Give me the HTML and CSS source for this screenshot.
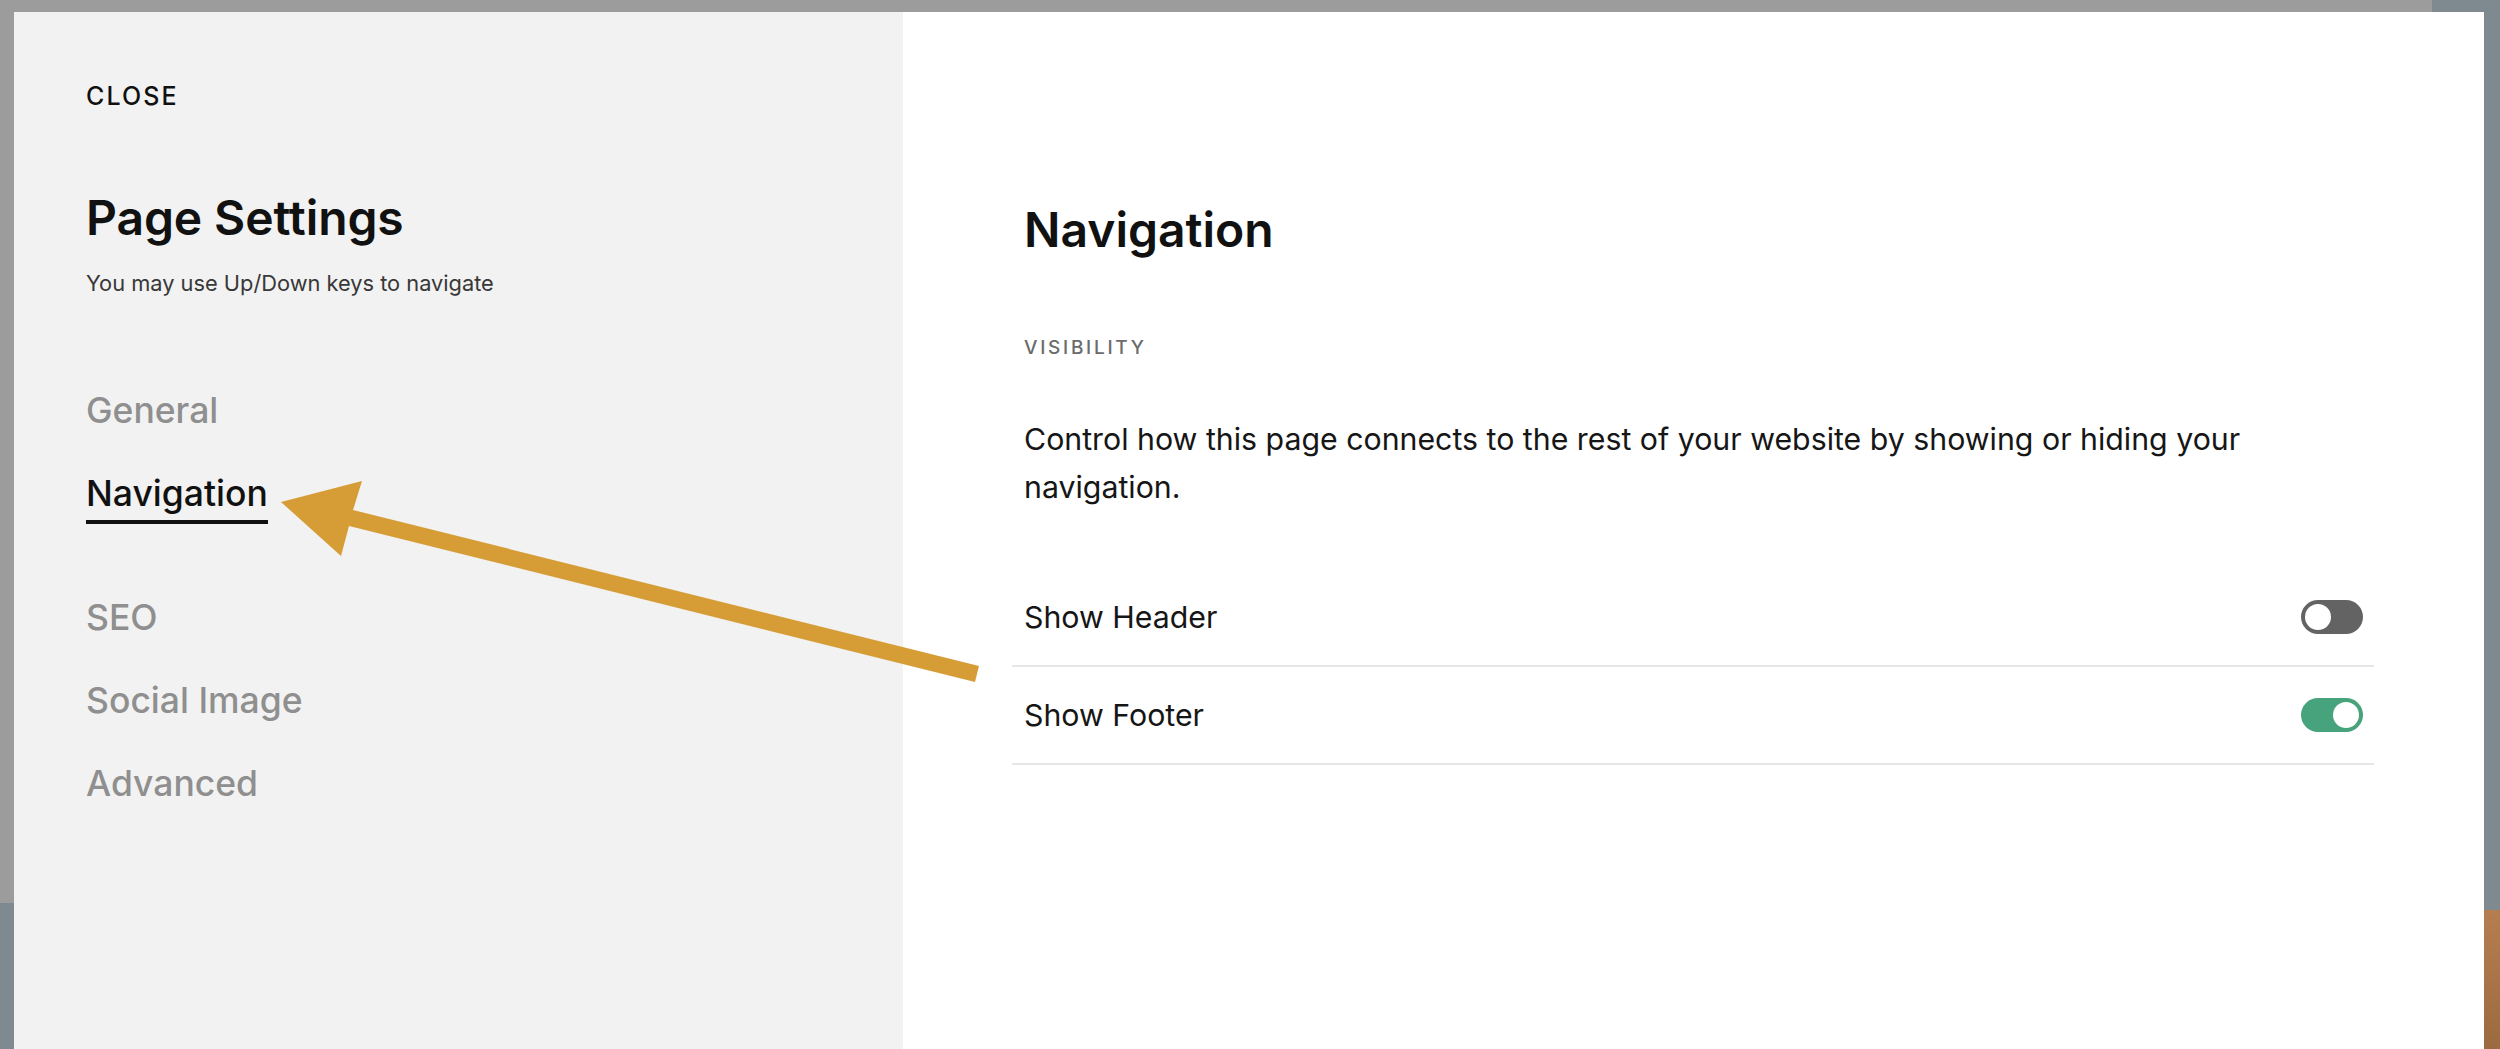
FILE: index.html
```html
<!DOCTYPE html>
<html lang="en">
<head>
<meta charset="utf-8">
<title>Page Settings</title>
<link rel="stylesheet" href="styles.css">
</head>
<body>
<div class="backdrop">
  <div class="modal">
    <aside class="sidebar">
      <div class="close">CLOSE</div>
      <h1 class="title">Page Settings</h1>
      <p class="subtitle">You may use Up/Down keys to navigate</p>
      <nav class="nav">
        <span class="nav-item">General</span>
        <span class="nav-item active">Navigation</span>
        <span class="nav-item">SEO</span>
        <span class="nav-item">Social Image</span>
        <span class="nav-item">Advanced</span>
      </nav>
    </aside>
    <main class="main">
      <h2 class="heading">Navigation</h2>
      <div class="section-label">VISIBILITY</div>
      <p class="desc">Control how this page connects to the rest of your website by showing or hiding your navigation.</p>
      <div class="rows">
        <div class="row">
          <span class="row-label">Show Header</span>
          <span class="toggle off"><span class="knob"></span></span>
        </div>
        <div class="row">
          <span class="row-label">Show Footer</span>
          <span class="toggle on"><span class="knob"></span></span>
        </div>
      </div>
    </main>
  </div>
</div>
<svg class="arrow" width="2500" height="1049" viewBox="0 0 2500 1049" xmlns="http://www.w3.org/2000/svg">
  <polygon points="281,502 362,481 353,510 979,666 975,682 349,526 341,556" fill="#d69d36"/>
</svg>
</body>
</html>
```
FILE: styles.css
```css
* { box-sizing: border-box; }

html, body {
  margin: 0;
  padding: 0;
  width: 2500px;
  height: 1049px;
  overflow: hidden;
}

body {
  font-family: "Inter", "Noto Sans", "Liberation Sans", sans-serif;
  color: #111;
  position: relative;
  background:
    linear-gradient(#b57e50, #9c6a40) right 910px / 16px 139px no-repeat,
    linear-gradient(#9c9c9c, #9c9c9c) 0 0 / 2432px 903px no-repeat,
    #7f8a90;
}

.backdrop {
  height: 1049px;
  padding: 12px 16px 0 14px;
}

.modal {
  display: flex;
  height: 100%;
}

.sidebar {
  width: 889px;
  flex: none;
  background: #f2f2f2;
  padding: 72px 0 0 72px;
}

.close {
  font-size: 25px;
  line-height: 24px;
  font-weight: 500;
  letter-spacing: 2.1px;
  color: #111;
}

.title {
  margin: 82px 0 0;
  font-size: 48px;
  line-height: 56px;
  font-weight: 600;
  letter-spacing: -0.1px;
  color: #111;
}

.subtitle {
  margin: 23px 0 0;
  font-size: 21.8px;
  line-height: 28px;
  font-weight: 400;
  color: #383838;
}

.nav {
  margin-top: 92px;
  display: flex;
  flex-direction: column;
  align-items: flex-start;
  gap: 39px;
}

.nav-item {
  font-size: 35.5px;
  line-height: 44px;
  font-weight: 500;
  color: #8f8f8f;
}

.nav-item.active {
  color: #111;
  padding-bottom: 4px;
  border-bottom: 4px solid #111;
  margin-bottom: 33px;
}

.main {
  flex: 1;
  background: #fff;
  padding: 190px 110px 0 109px;
}

.heading {
  margin: 0 12px;
  font-size: 48px;
  line-height: 56px;
  font-weight: 600;
  color: #111;
}

.section-label {
  margin: 78px 12px 0;
  font-size: 19px;
  line-height: 24px;
  font-weight: 500;
  letter-spacing: 2.7px;
  color: #6b6b6b;
}

.desc {
  margin: 55px 12px 0;
  font-size: 30.3px;
  line-height: 48px;
  font-weight: 400;
  color: #161616;
}

.rows {
  margin-top: 58px;
}

.row {
  height: 98px;
  display: flex;
  align-items: center;
  justify-content: space-between;
  padding: 0 11px 0 12px;
  border-bottom: 2px solid #e6e6e6;
}

.row-label {
  font-size: 30.3px;
  line-height: 40px;
  color: #161616;
}

.toggle {
  width: 62px;
  height: 34px;
  border-radius: 17px;
  padding: 4px;
  display: flex;
}

.toggle.off { background: #636363; justify-content: flex-start; }
.toggle.on { background: #47a37b; justify-content: flex-end; }

.knob {
  width: 26px;
  height: 26px;
  border-radius: 50%;
  background: #fff;
}

.arrow {
  position: absolute;
  left: 0;
  top: 0;
  pointer-events: none;
}
```
